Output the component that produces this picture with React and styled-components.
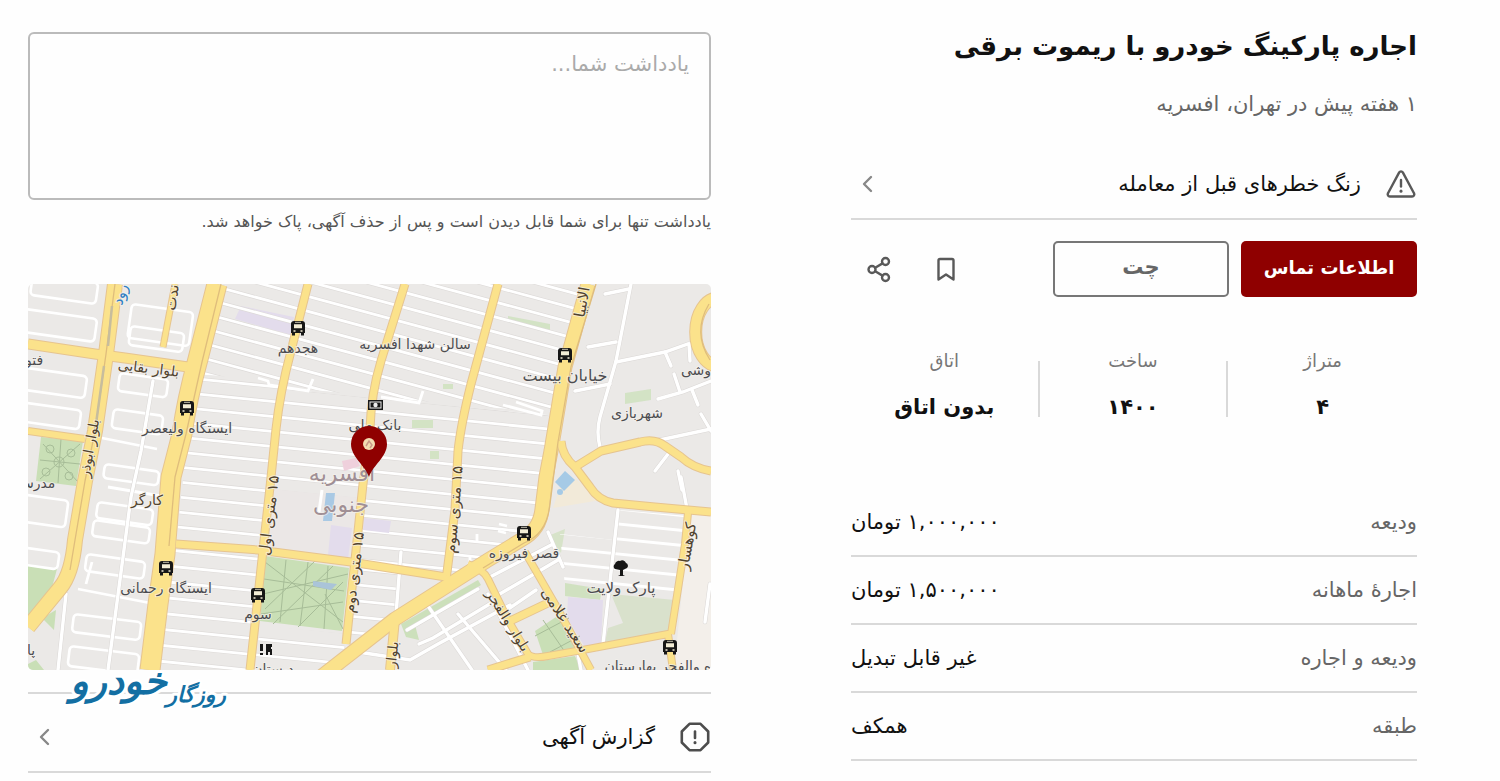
import React from 'react';
import styled, { createGlobalStyle } from 'styled-components';

const GlobalStyle = createGlobalStyle`
  * {
    box-sizing: border-box;
  }

  body {
    margin: 0;
    background: #fefefe;
    color: #111;
    font-family: 'DejaVu Sans', sans-serif;
  }
`;

const Page = styled.main`
  direction: rtl;
  display: grid;
  grid-template-columns: 566fr 683fr;
  gap: 140px;
  align-items: start;
  padding: 20px 83px 8px 28px;
`;

const Column = styled.section`
  display: flex;
  flex-direction: column;
  min-width: 0;
`;

const Title = styled.h1`
  margin: 0;
  font-size: 26px;
  line-height: 52px;
  font-weight: 700;
  color: #111;
  white-space: nowrap;
`;

const Subtitle = styled.p`
  margin: 16px 0 0;
  font-size: 21px;
  line-height: 32px;
  color: #666;
`;

const LinkRow = styled.a`
  display: flex;
  align-items: center;
  gap: 24px;
  height: ${props => props.$height};
  margin-top: ${props => props.$gap};
  padding-top: ${props => (props.$topLine ? '8px' : '0')};
  border-bottom: 2px solid #d9d9d9;
  border-top: ${props => (props.$topLine ? '2px solid #d9d9d9' : 'none')};
  color: #111;
  font-size: 21px;
  text-decoration: none;

  span {
    flex: 1;
  }
`;

const Actions = styled.div`
  display: flex;
  align-items: center;
  gap: 12px;
  margin-top: 21px;
`;

const Button = styled.button`
  width: 176px;
  height: 56px;
  padding: 0 0 4px;
  border-radius: 5px;
  border: ${props => (props.$primary ? 'none' : '2px solid #777')};
  background: ${props => (props.$primary ? '#8f0000' : 'transparent')};
  color: ${props => (props.$primary ? '#fff' : '#666')};
  font-family: inherit;
  font-size: ${props => (props.$primary ? '18px' : '21px')};
  font-weight: 700;
  cursor: pointer;
`;

const IconGroup = styled.div`
  display: flex;
  gap: 27px;
  margin-right: auto;
  padding-left: 8px;
`;

const IconButton = styled.button`
  display: flex;
  align-items: center;
  justify-content: center;
  width: 40px;
  height: 40px;
  padding: 0;
  border: none;
  background: none;
  color: #595959;
  cursor: pointer;
`;

const Stats = styled.dl`
  display: grid;
  grid-template-columns: repeat(3, 1fr);
  margin: 64px 0 0;
`;

const Stat = styled.div`
  height: 56px;
  text-align: center;

  & + & {
    border-right: 2px solid #d9d9d9;
  }

  dt {
    margin-top: -14px;
    font-size: 18px;
    line-height: 28px;
    color: #777;
  }

  dd {
    margin: 16px 0 0;
    font-size: 21px;
    line-height: 32px;
    font-weight: 700;
  }
`;

const Details = styled.dl`
  margin: 72px 0 0;
`;

const Detail = styled.div`
  display: flex;
  align-items: center;
  justify-content: space-between;
  height: 68px;
  border-bottom: 2px solid #d9d9d9;
  font-size: 21px;

  dt {
    color: #666;
  }

  dd {
    margin: 0;
    color: #111;
  }
`;

const Note = styled.textarea`
  display: block;
  width: 100%;
  height: 168px;
  margin-top: 12px;
  padding: 14px 20px;
  border: 2px solid #bbb;
  border-radius: 6px;
  background: transparent;
  resize: none;
  font-family: inherit;
  font-size: 21px;
  line-height: 32px;

  &::placeholder {
    color: #aaa;
    opacity: 1;
  }
`;

const NoteHint = styled.label`
  margin-top: 8px;
  font-size: 16px;
  line-height: 28px;
  color: #555;
  white-space: nowrap;
`;

const MapFrame = styled.div`
  position: relative;
  margin-top: 48px;

  > svg {
    display: block;
    width: 100%;
    height: auto;
    border-radius: 5px;
  }
`;

const Logo = styled.div`
  position: absolute;
  left: 46px;
  bottom: -46px;
  width: 154px;

  svg {
    display: block;
    width: 100%;
    overflow: visible;
  }
`;

const stroke = {
  fill: 'none',
  stroke: 'currentColor',
  strokeLinecap: 'round',
  strokeLinejoin: 'round',
};

const WarningIcon = () => (
  <svg width="32" height="30" viewBox="0 0 32 30" color="#595959" {...stroke} strokeWidth="2.4">
    <path d="M14.2 3.4a2.1 2.1 0 0 1 3.6 0l11.2 20.8a2.200 2.200 0 0 1-1.900 3.300h-22.200a2.200 2.200 0 0 1-1.900-3.300z" />
    <path d="M16 11v6.500" />
    <path d="M16 22v.2" strokeWidth="3" />
  </svg>
);

const ReportIcon = () => (
  <svg width="32" height="32" viewBox="0 0 32 32" color="#4d4d4d" {...stroke} strokeWidth="2.6">
    <path d="M10.500 2.800h11l7.700 7.700v11l-7.700 7.700h-11l-7.700-7.700v-11z" />
    <path d="M16 10.500v6.500" />
    <path d="M16 21.600v.2" strokeWidth="3" />
  </svg>
);

const Chevron = () => (
  <svg width="32" height="20" viewBox="0 0 32 20" color="#888" {...stroke} strokeWidth="2.4">
    <path d="M20 3l-7 7 7 7" />
  </svg>
);

const BookmarkIcon = () => (
  <svg width="28" height="28" viewBox="0 0 28 28" {...stroke} strokeWidth="2.4">
    <path d="M6.500 5.500a1.500 1.500 0 0 1 1.500-1.500h12a1.500 1.500 0 0 1 1.500 1.500v19l-7.500-5-7.500 5z" />
  </svg>
);

const ShareIcon = () => (
  <svg width="28" height="28" viewBox="0 0 28 28" {...stroke} strokeWidth="2.4">
    <circle cx="20.500" cy="6.500" r="3.500" />
    <circle cx="7" cy="14.500" r="3.500" />
    <circle cx="20.500" cy="22.500" r="3.500" />
    <path d="M10.200 12.700l7.300-4.300M10.200 16.300l7.300 4.300" />
  </svg>
);

// [path, width]
const roads = [
  ['M147 0L135 63', 5],
  ['M0 147L57 155', 6],
  ['M280 0L263 67Q252 108 248 145L242 203L235 266L222 386', 7],
  ['M377 0L353 77Q343 110 342 145L335 200L327 276L318 360', 7],
  ['M470 0L443 100Q433 140 430 167L427 226L418 296', 7],
  ['M148 260L230 266L323 278L418 293', 7],
  ['M533 157Q534 172 547 183L562 203Q570 216 585 219L627 223L683 228', 7],
  ['M547 183L573 167L612 158Q627 154 637 162L653 173Q665 184 683 187', 7],
  ['M690 14A21 32 0 0 0 690 82', 11],
  ['M660 229L657 260L643 350', 6],
  ['M440 280Q455 285 460 295L480 336L500 370Q505 375 520 372L560 365L640 350L645 386', 6],
  ['M497 268L527 320L563 386', 6],
  ['M480 338L522 318', 7],
  ['M460 386L502 373', 7],
  ['M367 335L362 386', 8],
  ['M0 60L67 70L97 74L160 83', 9],
  ['M87 0L78 70L67 147L57 197L47 256Q44 290 32 304L0 343', 14],
  ['M294 392L367 335L460 276L493 256Q512 246 514 225L518 193L523 167L537 83L560 0', 13],
  ['M189 0L170 75Q159 115 154 150L143 193L137 270L130 320L122 386', 19],
];

const lanes = [
  'M193 0L174 78L158 150L147 193L141 262',
  'M87 0L78 70L67 147L57 197L47 256L42 286',
  'M568 0L543 83L530 158L522 220Q519 250 496 259L455 284',
  'M681 20Q664 48 682 76',
];

const bigStreets = [
  'M603 0L588 77L572 133Q568 148 572 163', 'M577 10L601 5', 'M560 63L588 58',
  'M588 78L637 68L660 60H670', 'M630 115L655 108L683 97', 'M637 68L643 82M646 90L652 108',
  'M661 60L662 77', 'M627 157L683 145', 'M547 107L582 100', 'M627 187L640 170', 'M673 130L683 147',
  'M664 106L670 121', 'M653 193L659 225', 'M650 187L654 206', 'M590 226L575 360',
  'M373 268L368 330', 'M467 322L500 386', 'M125 97L113 167L103 213L80 386', 'M38 310L30 386',
  'M379 346L450 305', 'M391 360L405 354L465 318', 'M330 368L382 376L410 360L482 321',
  'M430 330L478 386', 'M400 322L444 386', 'M460 310L483 352',
  'M520 248L535 283M462 293L525 260M470 311L530 276',
  'M476 328L508 306', 'M682 300L677 338', 'M553 386L550 370',
];

const blocks = [
  [5, -10, 66, 21, 8], [-10, 24, 80, 23, 8], [-8, 83, 68, 22, 8], [-8, 118, 62, 19, 8],
  [104, 20, 62, 34, 8], [103, 42, 54, 19, 8], [92, 89, 49, 18, 8], [86, 125, 50, 19, 8],
  [77, 180, 55, 14, 8], [70, 218, 56, 16, 8], [66, 236, 57, 16, 8], [59, 270, 59, 17, 8],
  [46, 330, 68, 18, 7], [42, 362, 70, 20, 7], [-8, 210, 49, 27, 8], [-8, 263, 40, 17, 8],
];

const buses = [[270, 44], [537, 71], [159, 124], [496, 249], [138, 284], [230, 311], [642, 363]];

// x, y, text, angle, size, tone
const labels = [
  [270, 69, 'هجدهم'],
  [387, 65, 'سالن شهدا افسریه'],
  [537, 97, 'خیابان بیست', 0, 16],
  [609, 134, 'شهربازی'],
  [668, 91, 'وشی'],
  [6, 81, 'فتو'],
  [120, 89, 'بلوار بقایی', 7, 14, 'road'],
  [159, 149, 'ایستگاه ولیعصر'],
  [347, 146, 'بانک ملی'],
  [8, 204, 'مدرس'],
  [119, 221, 'کارگر', 0, 14, 'road'],
  [138, 309, 'ایستگاه رحمانی'],
  [230, 335, 'سوم'],
  [496, 274, 'قصر فیروزه'],
  [593, 309, 'پارک ولایت', 0, 15],
  [3, 371, 'پا'],
  [630, 387, 'ه والفجر بهارستان'],
  [245, 390, 'دبستان'],
  [246, 232, '۱۵ متری اول', -83, 15, 'road'],
  [331, 289, '۱۵ متری دوم', -83, 15, 'road'],
  [431, 226, '۱۵ متری سوم', -85, 15, 'road'],
  [66, 165, 'بلوار ابوذر', -80, 14, 'road'],
  [476, 339, 'بلوار والفجر', 58, 14, 'road'],
  [533, 339, 'سعید غلامی', 57, 15, 'road'],
  [664, 263, 'کوهسار', -80, 15, 'road'],
  [369, 371, 'بلوار', -84, 14, 'road'],
  [559, 19, 'الانبیا', -80, 15, 'road'],
  [149, 14, 'ندت', -82, 15, 'road'],
  [97, 12, 'رود', -72, 15, 'water'],
];

const toneColor = { road: '#51432f', water: '#2f7fc4', place: '#4c4c50' };

const parallel = (x1, x2, from, to, step, slope) => {
  let d = '';
  for (let y = from; y < to; y += step) {
    d += `M${x1} ${y}L${x2} ${y + (x2 - x1) * slope}`;
  }
  return d;
};

const BusIcon = ({ x, y }) => (
  <g transform={`translate(${x - 7} ${y - 7})`}>
    <path d="M3 0h8a3 3 0 0 1 3 3v9h-1v2.500h-3V12H4v2.500H1V12H0V3a3 3 0 0 1 3-3z" fill="#171717" />
    <path d="M3 3.200h8v4H3z" fill="#f3edd6" />
    <path d="M2.500 9.200h2v1.600h-2zM9.500 9.200h2v1.600h-2z" fill="#f3edd6" />
    <path d="M4 1.300h6" stroke="#f3edd6" strokeWidth=".8" />
  </g>
);

const CityMap = () => (
  <svg viewBox="0 0 683 386" role="img" aria-label="نقشه افسریه جنوبی">
    <defs>
      <clipPath id="steep">
        <path d="M189 0H560L532 130L393 117L285 106L230 95L166 90z" />
      </clipPath>
      <clipPath id="flat">
        <path d="M166 92L230 97L285 108L393 119L532 132L518 240L460 276L418 293L230 266L148 260z" />
      </clipPath>
      <clipPath id="low">
        <path d="M137 262L235 268L222 386H120zM323 280L374 288L367 335L318 365zM233 342L318 350L316 366L292 386H224z" />
      </clipPath>
      <clipPath id="east">
        <path d="M590 226L660 232L645 312L537 303L532 250L586 256z" />
      </clipPath>
    </defs>

    <rect width="683" height="386" fill="#ebe9e7" />
    <path d="M662 230h21v156h-37z" fill="#f3efea" />
    <path d="M548 195l25 21-48 8 8-24z" fill="#f2ead9" />

    <g fill="#c9dfb6">
      <path d="M13 153l42 4-7 45-40-5z" />
      <path d="M0 281l29 4-7 26-22 24zM14 334l14-8-2 20zM0 380l8-4 8 10H0z" />
      <path d="M237 272l84 12-7 63-82-10z" />
      <path d="M480 32l42 8v6l-42-8z" opacity=".7" />
      <path d="M597 109l26-4v11l-26 4z" opacity=".7" />
      <path d="M507 347l24-16 24 34-40 6z" />
      <path d="M505 378l42-6 6 14h-48z" />
      <path d="M537 299l37 6-2 11-35-4z" opacity=".8" />
      <path d="M373 340l77-44 3 5-66 40 4 15-13-3z" opacity=".9" />
      <path d="M520 252l17-7-4 24z" opacity=".6" />
    </g>
    <path d="M583 310l64 6-6 32-64 10 3-14 15-5z" fill="#d9e1cc" />
    <path d="M540 313l35 3-2 44-16 3-18-29z" fill="#e3dcec" />
    <path d="M213 22l53 11-3 18-56-16z" fill="#e3dcec" />
    <path d="M537 187l10 9-11 11-9-9z" fill="#a5cae6" />
    <circle cx="532" cy="208" r="3" fill="#a5cae6" />

    <g stroke="#a7bd98" fill="none">
      <path d="M237 278l78 60M320 290l-85 20M258 276l-6 62M280 278l-8 64M300 282l-4 63M237 325l50-48M245 340l60-58M236 295l80 12M270 343l45-45M233 330l82-12M297 310l18 35" />
      <path d="M15 160l35 38M52 160l-40 35M33 155l-3 44M12 176l40 4" />
      <path d="M515 336l22 32M507 352l34-18M522 368l30-16" />
      <circle cx="22" cy="165" r="4" />
      <circle cx="43" cy="169" r="4" />
      <circle cx="31" cy="178" r="5" />
      <circle cx="18" cy="188" r="4" />
      <circle cx="41" cy="192" r="4" />
    </g>
    <path d="M285 297l24 3-6 6-18-4z" fill="#aac4d8" />

    <g fill="none" stroke="#dddad8" strokeWidth="4">
      <path d={parallel(160, 580, -110, 90, 15, 0.27)} clipPath="url(#steep)" />
      <path d={parallel(140, 560, 62, 280, 15, 0.1)} clipPath="url(#flat)" />
      <path d={parallel(110, 460, 263, 400, 16, 0.1)} clipPath="url(#low)" />
    </g>
    <g fill="none" stroke="#fff" strokeWidth="2.800">
      <path d={parallel(160, 580, -110, 90, 15, 0.27)} clipPath="url(#steep)" />
      <path d={parallel(140, 560, 62, 280, 15, 0.1)} clipPath="url(#flat)" />
      <path d={parallel(110, 460, 263, 400, 16, 0.1)} clipPath="url(#low)" />
      <path d={parallel(520, 660, 218, 320, 15, 0.1)} clipPath="url(#east)" />
      <path d="M230 94l10 3 1 4 39 6 5-12M353 113l38 6 4-12M488 118l26 9-1 4-38-10" />
      <path d="M74 154l55 11M80 203l53 9M50 305l72 14M64 278l-6 22" />
      <path d="M471 240l8 2M470 247l8 2M449 250v8M442 271v8" />
    </g>
    <path d="M244 205l91 9-8 61-91-11z" fill="#ebe7e6" />
    <g fill="#e3dcec">
      <path d="M303 241l21 3-4 31-20-4z" />
      <path d="M336 234l27 3-2 12-26-3z" />
    </g>
    <path d="M314 177l14-3 4 8-16 5z" fill="#efd0dc" />
    <path d="M298 209h9l-3 28h-9z" fill="#a9c9e4" />
    <path d="M294 206l-3 22" stroke="#fff" strokeWidth="3" />
    <path d="M384 136h21v8h-21zM402 167h9v8h-9zM415 100h10v5h-10z" fill="#d3e3c4" />

    <g fill="none" strokeLinecap="round">
      {blocks.map(([x, y, w, h, angle]) => (
        <rect
          key={`${x}-${y}`}
          x={x}
          y={y}
          width={w}
          height={h}
          rx="4"
          transform={`rotate(${angle} ${x} ${y})`}
          stroke="#fff"
          strokeWidth="2.600"
        />
      ))}
      {bigStreets.map(d => <path key={d} d={d} stroke="#dad7d5" strokeWidth="4.400" />)}
      {bigStreets.map(d => <path key={d} d={d} stroke="#fff" strokeWidth="3.400" />)}
    </g>

    <g fill="none" strokeLinejoin="round">
      {roads.map(([d, w]) => <path key={d} d={d} stroke="#e6c48f" strokeWidth={w + 2} />)}
      {roads.map(([d, w]) => <path key={d} d={d} stroke="#fbe28b" strokeWidth={w} />)}
      {lanes.map(d => <path key={d} d={d} stroke="#dfbd7c" strokeWidth="1.300" />)}
    </g>
    <path d="M84 22L80 62M76 82L67 147" stroke="#c7bd9d" strokeWidth="2.500" fill="none" />

    {buses.map(([x, y]) => <BusIcon key={`${x}-${y}`} x={x} y={y} />)}
    <g transform="translate(340 116)">
      <rect width="15" height="10" fill="#171717" />
      <rect x="2" y="2" width="11" height="6" fill="none" stroke="#eee" />
      <circle cx="7.500" cy="5" r="2.200" fill="#eee" />
    </g>
    <path d="M592 291v-5l-5-1a3 3 0 0 1 0-5 4 4 0 0 1 5-3 4 4 0 0 1 6 2 3 3 0 0 1 1 5l-4 2v5l2 1h-7z" fill="#171717" />
    <path d="M232 360h3v7h-3zM232 369h3v2h-3zM238 360h6v3h-1v2h1v6h-2v-3h-2v3h-2z" fill="#171717" />

    <g
      fontFamily="'DejaVu Sans', sans-serif"
      textAnchor="middle"
      direction="rtl"
      stroke="#f4f1ec"
      strokeWidth="2"
      strokeOpacity=".7"
      paintOrder="stroke"
      strokeLinejoin="round"
    >
      <g fontSize="22" fill="#a08f95">
        <text x="314" y="197">افسریه</text>
        <text x="313" y="228">جنوبی</text>
      </g>
      {labels.map(([x, y, text, angle = 0, size = 14, tone = 'place']) => (
        <text
          key={text}
          x={x}
          y={y}
          fontSize={size}
          fill={toneColor[tone]}
          transform={`rotate(${angle} ${x} ${y})`}
        >
          {text}
        </text>
      ))}
    </g>

    <path
      d="M341 193C337 181 323 173 323 160a18 18 0 0 1 36 0C359 173 345 181 341 193z"
      fill="#8f0000"
    />
    <circle cx="341" cy="160" r="6" fill="#f3dcb2" />
    <path d="M338 162l3-5 3 4-2 3" fill="none" stroke="#c99a88" strokeWidth="1.500" />
  </svg>
);

const Brand = () => (
  <Logo>
    <svg
      viewBox="0 0 154 80"
      role="img"
      aria-label="روزگار خودرو"
      fontFamily="'DejaVu Sans', sans-serif"
      fontWeight="700"
      fontStyle="italic"
      fill="#136fa3"
      stroke="#fff"
      strokeWidth="6"
      strokeLinejoin="round"
      paintOrder="stroke"
      direction="rtl"
    >
      <text x="152" y="66" fontSize="22">روزگار</text>
      <text x="93" y="58" fontSize="38">خودرو</text>
    </svg>
  </Logo>
);

const stats = [
  { label: 'متراژ', value: '۴' },
  { label: 'ساخت', value: '۱۴۰۰' },
  { label: 'اتاق', value: 'بدون اتاق' },
];

const details = [
  { label: 'ودیعه', value: '۱,۰۰۰,۰۰۰ تومان' },
  { label: 'اجارهٔ ماهانه', value: '۱,۵۰۰,۰۰۰ تومان' },
  { label: 'ودیعه و اجاره', value: 'غیر قابل تبدیل' },
  { label: 'طبقه', value: 'همکف' },
];

const App = () => {
  return (
    <>
      <GlobalStyle />
      <Page lang="fa">
        <Column>
          <Title>اجاره پارکینگ خودرو با ریموت برقی</Title>
          <Subtitle>۱ هفته پیش در تهران، افسریه</Subtitle>

          <LinkRow href="#warnings" $height="70px" $gap="30px">
            <WarningIcon />
            <span>زنگ خطرهای قبل از معامله</span>
            <Chevron />
          </LinkRow>

          <Actions>
            <Button type="button" $primary>اطلاعات تماس</Button>
            <Button type="button">چت</Button>
            <IconGroup>
              <IconButton type="button" aria-label="نشان کردن"><BookmarkIcon /></IconButton>
              <IconButton type="button" aria-label="اشتراک‌گذاری"><ShareIcon /></IconButton>
            </IconGroup>
          </Actions>

          <Stats>
            {stats.map(item => (
              <Stat key={item.label}>
                <dt>{item.label}</dt>
                <dd>{item.value}</dd>
              </Stat>
            ))}
          </Stats>

          <Details>
            {details.map(item => (
              <Detail key={item.label}>
                <dt>{item.label}</dt>
                <dd>{item.value}</dd>
              </Detail>
            ))}
          </Details>
        </Column>

        <Column>
          <Note id="note" placeholder="یادداشت شما..." />
          <NoteHint htmlFor="note">
            یادداشت تنها برای شما قابل دیدن است و پس از حذف آگهی، پاک خواهد شد.
          </NoteHint>

          <MapFrame>
            <CityMap />
            <Brand />
          </MapFrame>

          <LinkRow href="#report" $height="81px" $gap="22px" $topLine>
            <ReportIcon />
            <span>گزارش آگهی</span>
            <Chevron />
          </LinkRow>
        </Column>
      </Page>
    </>
  );
};

export default App;
